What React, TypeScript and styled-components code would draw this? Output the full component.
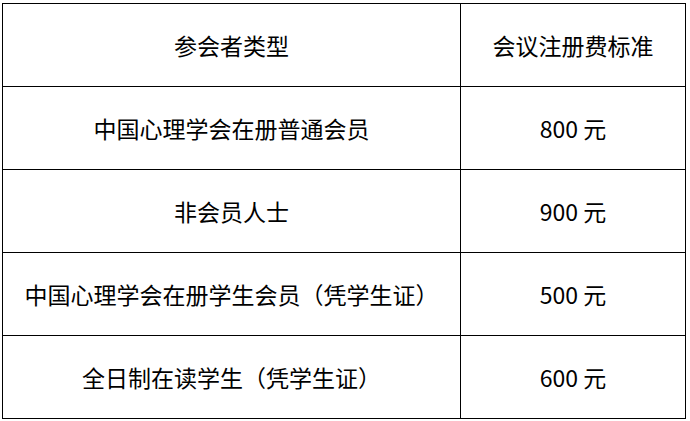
import React from 'react'
import styled, {createGlobalStyle} from 'styled-components'

const GlobalStyle = createGlobalStyle`
    html, body {
        margin: 0;
        padding: 0;
        background: #ffffff;
    }
    body {
        font-family: "Noto Sans CJK SC", "Noto Sans", sans-serif;
        color: #000000;
    }
`

const Page = styled.div`
    padding: 3px 0 0 2px;
`

const FeeTable = styled.table`
    width: 684px;
    border-collapse: collapse;
    table-layout: fixed;
`

const Cell = styled.td`
    height: 82px;
    padding: 0;
    border: 1px solid #000000;
    text-align: center;
    vertical-align: middle;
    font-size: 23px;
    line-height: 1;
    font-weight: 400;
`

const rows = [
    {type: '中国心理学会在册普通会员', fee: '800 元'},
    {type: '非会员人士', fee: '900 元'},
    {type: '中国心理学会在册学生会员（凭学生证）', fee: '500 元'},
    {type: '全日制在读学生（凭学生证）', fee: '600 元'},
]

const App: React.FC = () => {
    return (
        <>
            <GlobalStyle/>
            <Page>
                <FeeTable>
                    <colgroup>
                        <col style={{width: '458px'}}/>
                        <col/>
                    </colgroup>
                    <tbody>
                        <tr>
                            <Cell>参会者类型</Cell>
                            <Cell>会议注册费标准</Cell>
                        </tr>
                        {rows.map(row => (
                            <tr key={row.type}>
                                <Cell>{row.type}</Cell>
                                <Cell>{row.fee}</Cell>
                            </tr>
                        ))}
                    </tbody>
                </FeeTable>
            </Page>
        </>
    )
}

export default App
